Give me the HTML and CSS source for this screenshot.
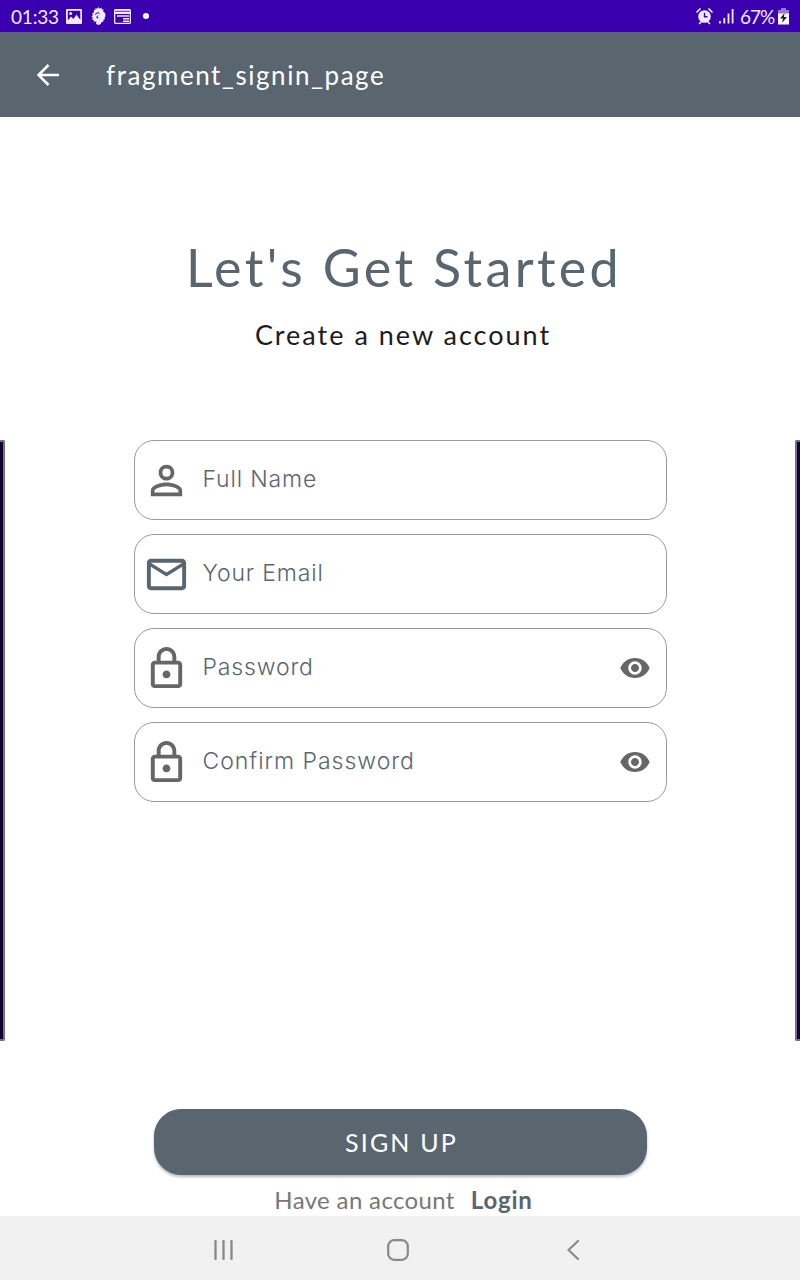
FILE: index.html
```html
<!DOCTYPE html>
<html lang="en">
<head>
<meta charset="utf-8">
<title>Sign up</title>
<link rel="stylesheet" href="styles.css">
</head>
<body>
<div class="screen">
  <div class="status">
    <span class="clock">01:33</span>
    <svg class="st-pic" width="16" height="15" viewBox="0 0 16 15"><path fill="#f1eaff" fill-rule="evenodd" d="M1 0h14a1 1 0 0 1 1 1v13a1 1 0 0 1-1 1H1a1 1 0 0 1-1-1V1a1 1 0 0 1 1-1zm.8 1.800v9.700l3.200-4 2.300 2.600 3.200-4.300 3.800 5V1.800z"/><circle cx="4.600" cy="4.500" r="1.500" fill="#f1eaff"/></svg>
    <svg class="st-lion" width="15" height="18" viewBox="0 0 15 18"><path fill="#f1eaff" d="M3 3l1.500-.5L4.500 1l1.700.8L7.500 0l1 1.700L10.500.500l.2 2 2-.2-.7 1.900c2 1 2.700 2.800 2.500 5.300l-1 .5.500 2-1.500.7-.2 2-1.600.2-1.200 2.300L7 18l-2-1.200.4-2.300-2.400.3-.4-1.800-1.600-.5.800-1.700L.500 9.500 2 8 1 6.500l1.700-.8z"/><path fill="none" stroke="#3a00b0" stroke-width="1" d="M4 7.500l3-2 1.500 1M7 8.500l-1.500 2 2 .5"/></svg>
    <svg class="st-news" width="17" height="15" viewBox="0 0 17 15"><path fill="#f1eaff" fill-rule="evenodd" d="M1 0h15l1 1v13l-1 1H1l-1-1V1zm.3 5v8.700h14.400V5z"/><path stroke="#f1eaff" stroke-width="1.400" d="M3 7h12M9 9.700h6M9 12.200h6"/><path d="M1 2.300h15" stroke="#3a00b0" stroke-width=".8"/></svg>
    <i class="dot"></i>
    <span class="spacer"></span>
    <svg class="st-alarm" width="17" height="17" viewBox="0 0 17 17"><circle cx="8.500" cy="8.500" r="6.300" fill="#f1eaff"/><path d="M1 4l3-3M16 4l-3-3M3.500 15.500l2-2M13.500 15.500l-2-2" stroke="#f1eaff" stroke-width="1.700" stroke-linecap="round"/><path d="M8.500 4.800v4h3" fill="none" stroke="#3a00b0" stroke-width="1.400"/></svg>
    <svg class="st-signal" width="15" height="16" viewBox="0 0 15 16"><path d="M1 13v2.500M5.300 10v5.500M9.500 5.500v10M13.600 1v14.500" stroke="#f1eaff" stroke-width="1.800"/></svg>
    <span class="percent">67%</span>
    <svg class="st-battery" width="11" height="17" viewBox="0 0 11 17"><path fill="#9a76db" d="M3 0h5v2h3v4H0V2h3z"/><path fill="#fff" d="M0 5.500h11v11H0z"/><path fill="#25105c" d="M6.500 5L2 10.500h3l-1 4.500 5-6H6z"/></svg>
  </div>
  <header class="appbar">
    <svg width="22" height="22" viewBox="0 0 22 22"><path d="M22 11H2M11.500 1L1.500 11l10 10" fill="none" stroke="#fff" stroke-width="2.500"/></svg>
    <h1 class="bar-title">fragment_signin_page</h1>
  </header>
  <main class="content">
    <h2 class="headline">Let's Get Started</h2>
    <p class="subtitle">Create a new account</p>
    <div class="form-row">
      <i class="edge edge-left"></i>
      <form class="form">
        <label class="field"><svg class="lead" viewBox="0 0 24 24"><path fill="#666" d="M12 5.900a2.100 2.100 0 1 1 0 4.200 2.100 2.100 0 0 1 0-4.200m0 9c2.970 0 6.100 1.460 6.100 2.100v1.100H5.900V17c0-.64 3.130-2.100 6.100-2.100M12 4C9.790 4 8 5.790 8 8s1.790 4 4 4 4-1.790 4-4-1.790-4-4-4zm0 9c-2.670 0-8 1.340-8 4v3h16v-3c0-2.660-5.330-4-8-4z"/></svg><span class="hint name">Full Name</span></label>
        <label class="field"><svg class="lead" viewBox="0 0 24 24"><path fill="#5a666f" d="M22 6c0-1.100-.9-2-2-2H4c-1.100 0-2 .9-2 2v12c0 1.100.9 2 2 2h16c1.100 0 2-.9 2-2V6zm-2 0l-8 5-8-5h16zm0 12H4V8l8 5 8-5v10z"/></svg><span class="hint email">Your Email</span></label>
        <label class="field"><svg class="lead" viewBox="0 0 24 24"><path fill="#666" d="M18 8h-1V6c0-2.760-2.240-5-5-5S7 3.240 7 6v2H6c-1.100 0-2 .9-2 2v10c0 1.100.9 2 2 2h12c1.100 0 2-.9 2-2V10c0-1.100-.9-2-2-2zM9 6c0-1.660 1.340-3 3-3s3 1.340 3 3v2H9V6zm9 14H6V10h12v10zm-6-3c1.100 0 2-.9 2-2s-.9-2-2-2-2 .9-2 2 .9 2 2 2z"/></svg><span class="hint pass">Password</span><svg class="eye" viewBox="0 0 24 24"><path fill="#666" d="M12 4.500C7 4.500 2.730 7.610 1 12c1.730 4.390 6 7.500 11 7.500s9.270-3.110 11-7.500c-1.730-4.390-6-7.500-11-7.500zM12 17c-2.760 0-5-2.240-5-5s2.240-5 5-5 5 2.240 5 5-2.240 5-5 5zm0-8c-1.660 0-3 1.340-3 3s1.340 3 3 3 3-1.340 3-3-1.340-3-3-3z"/></svg></label>
        <label class="field"><svg class="lead" viewBox="0 0 24 24"><path fill="#666" d="M18 8h-1V6c0-2.760-2.240-5-5-5S7 3.240 7 6v2H6c-1.100 0-2 .9-2 2v10c0 1.100.9 2 2 2h12c1.100 0 2-.9 2-2V10c0-1.100-.9-2-2-2zM9 6c0-1.660 1.340-3 3-3s3 1.340 3 3v2H9V6zm9 14H6V10h12v10zm-6-3c1.100 0 2-.9 2-2s-.9-2-2-2-2 .9-2 2 .9 2 2 2z"/></svg><span class="hint confirm">Confirm Password</span><svg class="eye" viewBox="0 0 24 24"><path fill="#666" d="M12 4.500C7 4.500 2.730 7.610 1 12c1.730 4.390 6 7.500 11 7.500s9.270-3.110 11-7.500c-1.730-4.390-6-7.500-11-7.500zM12 17c-2.760 0-5-2.240-5-5s2.240-5 5-5 5 2.240 5 5-2.240 5-5 5zm0-8c-1.660 0-3 1.340-3 3s1.340 3 3 3 3-1.340 3-3-1.340-3-3-3z"/></svg></label>
      </form>
      <i class="edge edge-right"></i>
    </div>
    <button class="signup">SIGN UP</button>
    <p class="account"><span class="have">Have an account</span><b class="login">Login</b></p>
  </main>
  <nav class="navbar">
    <svg width="20" height="20" viewBox="0 0 20 20"><path d="M1.500 1v18M9.500 1v18M17.500 1v18" stroke="#888" stroke-width="2.300" stroke-linecap="round"/></svg>
    <svg class="home" width="22" height="22" viewBox="0 0 22 22"><rect x="1.200" y="1.200" width="19.600" height="19.600" rx="6" fill="none" stroke="#888" stroke-width="2.200"/></svg>
    <svg width="12" height="20" viewBox="0 0 12 20"><path d="M11 1L1.500 10l9.500 9" fill="none" stroke="#888" stroke-width="2.200" stroke-linecap="round"/></svg>
  </nav>
</div>
</body>
</html>
```
FILE: styles.css
```css
* { box-sizing: border-box; margin: 0; padding: 0; }
body { background: #fff; font-family: Lato, sans-serif; }
.screen { width: 800px; height: 1280px; display: flex; flex-direction: column; overflow: hidden; }
svg { display: block; flex: none; }
h1, h2 { font-weight: 400; }
span, b, h1, h2 { white-space: nowrap; }

.status { height: 32px; flex: none; background: #3a00b0; color: #f1eaff; display: flex; align-items: center; padding: 0 11px; font-size: 19px; line-height: 32px; }
.clock { width: 55px; letter-spacing: -0.2px; padding-top: 2px; }
.st-lion { margin-left: 9px; }
.st-news { margin-left: 8px; }
.dot { width: 6px; height: 6px; border-radius: 50%; background: #fff; margin-left: 12px; }
.spacer { flex: 1; }
.st-signal { margin-left: 6px; }
.percent { width: 38px; margin-left: 6px; letter-spacing: -1px; padding-top: 2px; }

.appbar { height: 85px; flex: none; background: #5a666f; color: #fff; display: flex; align-items: center; padding-left: 37px; gap: 47px; }
.bar-title { font-size: 26px; letter-spacing: 1.55px; line-height: 32px; padding-top: 1px; }

.content { height: 1099px; flex: none; display: flex; flex-direction: column; align-items: center; padding-top: 115px; }
.headline { font-size: 52px; line-height: 70px; letter-spacing: 3.35px; color: #5a666f; padding-left: 8px; }
.subtitle { font-size: 27px; line-height: 36px; letter-spacing: 2px; color: #1c1c1c; margin-top: 15px; padding-left: 6px; }
.form-row { width: 800px; height: 601px; margin-top: 87px; display: flex; justify-content: space-between; align-items: flex-start; }
.edge { width: 5px; height: 601px; background: #16002f; flex: none; }
.edge-left { border: 2px solid #777181; border-left: 0; border-radius: 0 2px 2px 0; }
.edge-right { border: 2px solid #777181; border-right: 0; border-radius: 2px 0 0 2px; }
.form { width: 533px; display: flex; flex-direction: column; gap: 14px; }
.field { height: 80px; border: 1px solid #999; border-radius: 20px; display: flex; align-items: center; padding: 0 15px 0 8px; }
.lead { width: 47px; height: 47px; }
.hint { flex: 1; margin-left: 13px; font: 300 23px/34px Inter, sans-serif; letter-spacing: .85px; color: #5a666f; padding-bottom: 3px; }
.confirm { letter-spacing: .98px; }
.eye { width: 32px; height: 32px; }
.signup { width: 493px; height: 66px; margin-top: 68px; border: 0; border-radius: 27px; background: #5a666f; color: #fff; font: 25px/66px Lato, sans-serif; letter-spacing: 2.200px; padding-left: 3px; box-shadow: 0 2px 3px rgba(0,0,0,.28); }
.account { display: flex; gap: 16px; font-size: 24px; line-height: 34px; margin-top: 8px; padding-left: 7px; }
.have { color: #777; letter-spacing: .35px; }
.login { color: #5a666f; letter-spacing: .8px; }

.navbar { height: 64px; flex: none; background: #f1f1f1; display: flex; align-items: center; justify-content: space-between; padding: 3px 221px 0 214px; }
.home { margin-right: 5px; }
```
